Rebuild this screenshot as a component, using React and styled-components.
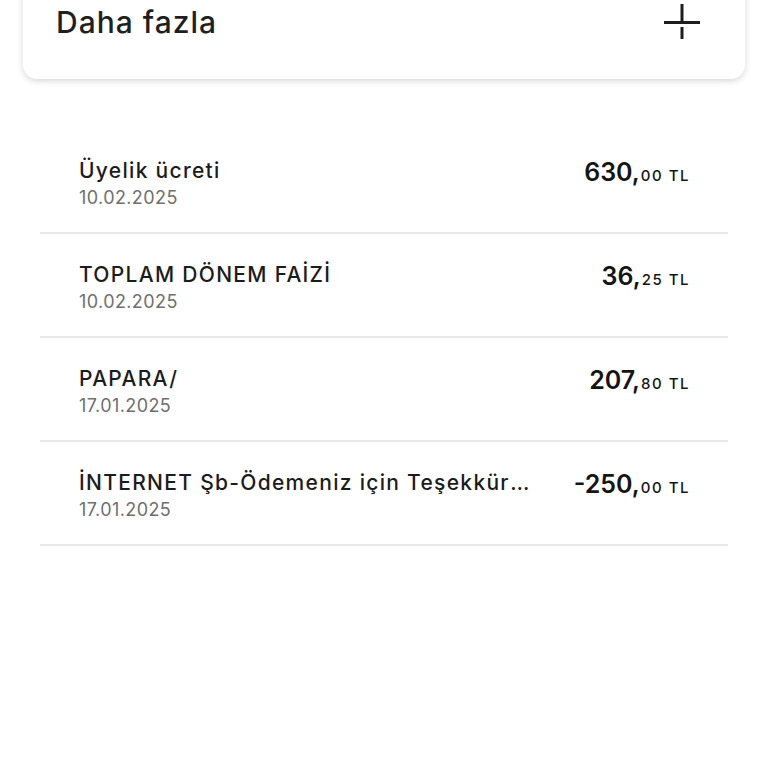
import React from "react";
import styled, { createGlobalStyle } from "styled-components";

const Global = createGlobalStyle`
  html, body { margin: 0; padding: 0; background: #ffffff; }
  body { font-family: Inter, "Noto Sans", sans-serif; color: #1c1c1c; }
  * { box-sizing: border-box; }
`;

const Page = styled.div`
  width: 768px;
  height: 768px;
  overflow: hidden;
  background: #fff;
`;

const Card = styled.div`
  margin: -40px 23px 0 23px;
  height: 119px;
  padding: 40px 45px 0 33px;
  background: #fff;
  border-radius: 14px;
  box-shadow: 0 2px 6px rgba(0, 0, 0, 0.16);
  display: flex;
  align-items: flex-start;
  justify-content: space-between;
`;

const CardTitle = styled.div`
  font-size: 30px;
  font-weight: 500;
  line-height: 44px;
  letter-spacing: 1px;
  color: #1f1f1f;
`;

const PlusIcon = styled.svg`
  width: 36px;
  height: 36px;
  margin-top: 4px;
  display: block;
`;

const List = styled.div`
  margin: 51px 40px 0 40px;
`;

const Row = styled.div`
  height: 104px;
  padding: 6px 38px 0 39px;
  border-bottom: 2px solid #e8e8e8;
  display: flex;
  align-items: center;
  gap: 38px;
`;

const Info = styled.div`
  flex: 1;
  min-width: 0;
  display: flex;
  flex-direction: column;
`;

const Title = styled.div`
  font-size: 21px;
  font-weight: 500;
  line-height: 28px;
  letter-spacing: 1.3px;
  color: #1c1c1c;
  white-space: nowrap;
  overflow: hidden;
  text-overflow: ellipsis;
`;

const DateText = styled.div`
  font-size: 18px;
  line-height: 26px;
  letter-spacing: 0.4px;
  color: #6f6f6f;
`;

const Amount = styled.div`
  align-self: flex-start;
  margin-top: 21px;
  white-space: nowrap;
  color: #151515;
  display: flex;
  align-items: baseline;
`;

const Whole = styled.span`
  font-size: 25px;
  font-weight: 600;
  letter-spacing: 0px;
`;

const Fraction = styled.span`
  font-size: 15px;
  font-weight: 500;
  letter-spacing: 1.5px;
  margin-left: 1px;
`;

const rows = [
  { title: "Üyelik ücreti", date: "10.02.2025", whole: "630", frac: "00" },
  { title: "TOPLAM DÖNEM FAİZİ", date: "10.02.2025", whole: "36", frac: "25" },
  { title: "PAPARA/", date: "17.01.2025", whole: "207", frac: "80" },
  {
    title: "İNTERNET Şb-Ödemeniz için Teşekkürler",
    date: "17.01.2025",
    whole: "-250",
    frac: "00",
  },
];

export default function App() {
  return (
    <Page>
      <Global />
      <Card>
        <CardTitle>Daha fazla</CardTitle>
        <PlusIcon viewBox="0 0 36 36">
          <path d="M0 18.5H36" stroke="#1e1e1e" strokeWidth="3" />
          <path d="M18 0V18.5" stroke="#1e1e1e" strokeWidth="3" />
          <path d="M18 23V35" stroke="#1e1e1e" strokeWidth="3" />
        </PlusIcon>
      </Card>
      <List>
        {rows.map((r) => (
          <Row key={r.title}>
            <Info>
              <Title>{r.title}</Title>
              <DateText>{r.date}</DateText>
            </Info>
            <Amount>
              <Whole>{r.whole},</Whole>
              <Fraction>{r.frac} TL</Fraction>
            </Amount>
          </Row>
        ))}
      </List>
    </Page>
  );
}
